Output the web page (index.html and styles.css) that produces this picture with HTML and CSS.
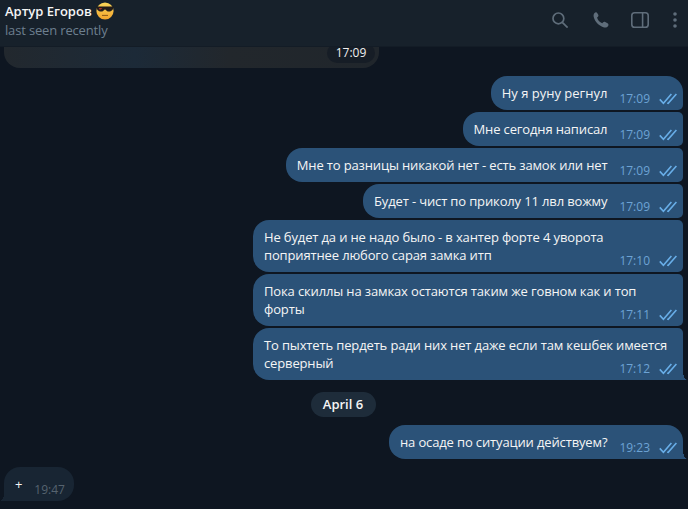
FILE: index.html
```html
<!DOCTYPE html>
<html lang="en">
<head>
    <meta charset="UTF-8">
    <title>Артур Егоров</title>
    <meta name="viewport" content="width=device-width, initial-scale=1.0">
    <link rel="stylesheet" href="styles.css">
</head>
<body>
    <svg class="sprite" width="0" height="0">
        <symbol id="checks" viewBox="0 0 18 12">
            <path d="M0.8 6.4 L4.4 10.2 L12.4 1 M8.2 10 L9.2 10.4 L17.4 1" fill="none" stroke="currentColor" stroke-width="1.6"/>
        </symbol>
        <linearGradient id="emoji-face" x1="0" y1="0" x2="0" y2="1">
            <stop offset="0" stop-color="#fbd75a"/>
            <stop offset="1" stop-color="#f2a32c"/>
        </linearGradient>
    </svg>
    <div class="chat">
        <header class="topbar">
            <div class="peer">
                <div class="peer-name">
                    Артур Егоров
                    <svg class="emoji" viewBox="0 0 18 18" width="18" height="18">
                        <circle cx="9" cy="9" r="8.6" fill="url(#emoji-face)"/>
                        <path d="M0.6 4.6 H17.4 C17.4 8.2 15.4 9.6 13 9.6 C11 9.6 10 8 9 7.2 C8 8 7 9.6 5 9.6 C2.6 9.6 0.6 8.2 0.6 4.6 Z" fill="#231d1a"/>
                        <path d="M3 6 H6.4 L4.8 7.6 H3.4 Z" fill="#a8322a"/>
                        <path d="M6 13.4 H12" fill="none" stroke="#8a5518" stroke-width="1"/>
                    </svg>
                </div>
                <div class="peer-status">last seen recently</div>
            </div>
            <div class="actions">
                <svg class="icon icon-search" viewBox="0 0 16 16" width="16" height="16">
                    <circle cx="6.4" cy="6.4" r="5.4" fill="none" stroke="currentColor" stroke-width="1.7"/>
                    <path d="M10.3 10.3 L15.6 15.6" fill="none" stroke="currentColor" stroke-width="1.7"/>
                </svg>
                <svg class="icon icon-phone" viewBox="0 0 17 17" width="16" height="16">
                    <path d="M1.4 1.2 C2.6 0 4 0.2 4.6 1.2 L5.6 3 C6 3.9 5.7 4.6 5 5.2 L4.3 5.8 C4.8 8.4 7.2 11 9.8 12 L10.8 11 C11.4 10.4 12.2 10.3 13 10.7 L15.4 12 C16.6 12.7 16.8 14 15.9 15.2 C15 16.4 13.4 16.8 11.8 16.4 C6.4 15 2 10.4 0.8 5.4 C0.4 3.8 0.6 2.2 1.4 1.2 Z" fill="currentColor"/>
                </svg>
                <svg class="icon icon-panel" viewBox="0 0 18 16" width="18" height="16">
                    <rect x="0.8" y="0.8" width="16.4" height="14.4" rx="2.8" fill="none" stroke="currentColor" stroke-width="1.6"/>
                    <path d="M11.6 1 V15" fill="none" stroke="currentColor" stroke-width="1.6"/>
                </svg>
                <svg class="icon icon-more" viewBox="0 0 4 16" width="4" height="16">
                    <circle cx="2" cy="2" r="1.8" fill="currentColor"/>
                    <circle cx="2" cy="8" r="1.8" fill="currentColor"/>
                    <circle cx="2" cy="14" r="1.8" fill="currentColor"/>
                </svg>
            </div>
        </header>

        <div class="history">
            <div class="media-bubble">
                <span class="media-time">17:09</span>
            </div>

            <div class="row-out first">
                <div class="bubble out"><span class="text">Ну я руну регнул</span><span class="meta">17:09<svg class="checks"><use href="#checks"/></svg></span></div>
            </div>
            <div class="row-out">
                <div class="bubble out"><span class="text">Мне сегодня написал</span><span class="meta">17:09<svg class="checks"><use href="#checks"/></svg></span></div>
            </div>
            <div class="row-out">
                <div class="bubble out"><span class="text">Мне то разницы никакой нет - есть замок или нет</span><span class="meta">17:09<svg class="checks"><use href="#checks"/></svg></span></div>
            </div>
            <div class="row-out">
                <div class="bubble out"><span class="text">Будет - чист по приколу 11 лвл вожму</span><span class="meta">17:09<svg class="checks"><use href="#checks"/></svg></span></div>
            </div>
            <div class="row-out">
                <div class="bubble out wide"><span class="text">Не будет да и не надо было - в хантер форте 4 уворота<br>поприятнее любого сарая замка итп</span><span class="meta">17:10<svg class="checks"><use href="#checks"/></svg></span></div>
            </div>
            <div class="row-out">
                <div class="bubble out wide"><span class="text">Пока скиллы на замках остаются таким же говном как и топ<br>форты</span><span class="meta">17:11<svg class="checks"><use href="#checks"/></svg></span></div>
            </div>
            <div class="row-out">
                <div class="bubble out wide last"><span class="text">То пыхтеть пердеть ради них нет даже если там кешбек имеется<br>серверный</span><span class="meta">17:12<svg class="checks"><use href="#checks"/></svg></span></div>
            </div>

            <div class="date-row"><span class="date-pill">April 6</span></div>

            <div class="row-out">
                <div class="bubble out last solo"><span class="text">на осаде по ситуации действуем?</span><span class="meta">19:23<svg class="checks"><use href="#checks"/></svg></span></div>
            </div>

            <div class="row-in">
                <div class="bubble in"><span class="text">+</span><span class="meta">19:47</span></div>
            </div>
        </div>
    </div>
</body>
</html>
```

FILE: styles.css
```css
* {
    box-sizing: border-box;
}
html, body {
    margin: 0;
    padding: 0;
    height: 100%;
}
body {
    font-family: "Open Sans", "Noto Sans", sans-serif;
    font-size: 13px;
    background-color: #0e1621;
    color: #f5f5f5;
    overflow: hidden;
}
.sprite {
    display: block;
    height: 0;
}
.chat {
    height: 509px;
    display: flex;
    flex-direction: column;
}
.topbar {
    position: relative;
    z-index: 1;
    height: 47px;
    flex: none;
    padding: 0 11px 0 5px;
    display: flex;
    justify-content: space-between;
    background-color: #17212b;
    border-bottom: 1px solid #131c26;
}
.peer-name {
    height: 20px;
    margin-top: 1px;
    display: flex;
    align-items: center;
    gap: 4px;
    font-weight: 600;
    line-height: 20px;
    color: #f5f5f5;
}
.peer-status {
    line-height: 19px;
    letter-spacing: -0.16px;
    color: #6d7f8f;
}
.actions {
    display: flex;
    align-items: flex-start;
    padding-top: 12px;
    color: #5f6d7a;
}
.icon-search {
    margin-right: 25px;
}
.icon-phone {
    margin-right: 22px;
}
.icon-panel {
    margin-right: 24px;
}
.history {
    flex: 1;
    display: flex;
    flex-direction: column;
    gap: 2px;
}
.media-bubble {
    position: relative;
    width: 375px;
    height: 21px;
    margin-left: 4px;
    background: linear-gradient(90deg, #22282e 0%, #1c2a38 35%, #22272c 60%, #20262c 100%);
    border-radius: 0 0 16px 16px;
}
.media-time {
    position: absolute;
    right: 4px;
    bottom: 5px;
    width: 48px;
    height: 20px;
    line-height: 20px;
    text-align: center;
    font-size: 12px;
    color: #f0f0f0;
    background-color: #161d26;
    border-radius: 10px;
}
.row-out {
    display: flex;
    justify-content: flex-end;
    padding-right: 5px;
}
.row-out.first {
    margin-top: 6px;
}
.row-in {
    display: flex;
    padding-left: 4px;
    margin-top: 6px;
}
.bubble {
    position: relative;
    display: flex;
    padding: 8px 6px 8px 11px;
    line-height: 18px;
    border-radius: 16px;
}
.text {
    letter-spacing: -0.14px;
}
.first .text {
    letter-spacing: 0;
}
.bubble.out {
    background-color: #2b5278;
    border-top-right-radius: 5px;
    border-bottom-right-radius: 5px;
}
.first .bubble.out,
.bubble.solo {
    border-top-right-radius: 16px;
}
.bubble.out.last {
    border-bottom-right-radius: 0;
}
.bubble.out.last::after {
    content: "";
    position: absolute;
    right: -5px;
    bottom: 0;
    width: 5px;
    height: 8px;
    background: radial-gradient(ellipse 5px 8px at 100% 0, transparent 98%, #2b5278 100%);
}
.bubble.in {
    padding-right: 9px;
    background-color: #182533;
    border-bottom-left-radius: 0;
}
.bubble.in::after {
    content: "";
    position: absolute;
    left: -4px;
    bottom: 0;
    width: 4px;
    height: 8px;
    background: radial-gradient(ellipse 4px 8px at 0 0, transparent 98%, #182533 100%);
}
.meta {
    display: flex;
    align-items: center;
    flex: none;
    height: 18px;
    margin: 6px 0 -6px 12px;
    font-size: 12px;
    color: #6da3d5;
}
.bubble.in .meta {
    color: #56636f;
}
.checks {
    width: 18px;
    height: 12px;
    margin-left: 9px;
    color: #68aee8;
}
.bubble.wide {
    width: 430px;
    flex-direction: column;
}
.bubble.wide .meta {
    align-self: flex-end;
    margin: -12px 0 -6px 0;
}
.date-row {
    display: flex;
    justify-content: center;
    padding-right: 2px;
    margin: 10px 0 6px;
}
.date-pill {
    width: 65px;
    height: 25px;
    line-height: 25px;
    text-align: center;
    font-weight: 600;
    border-radius: 13px;
    background-color: #1e2c3a;
}
```
